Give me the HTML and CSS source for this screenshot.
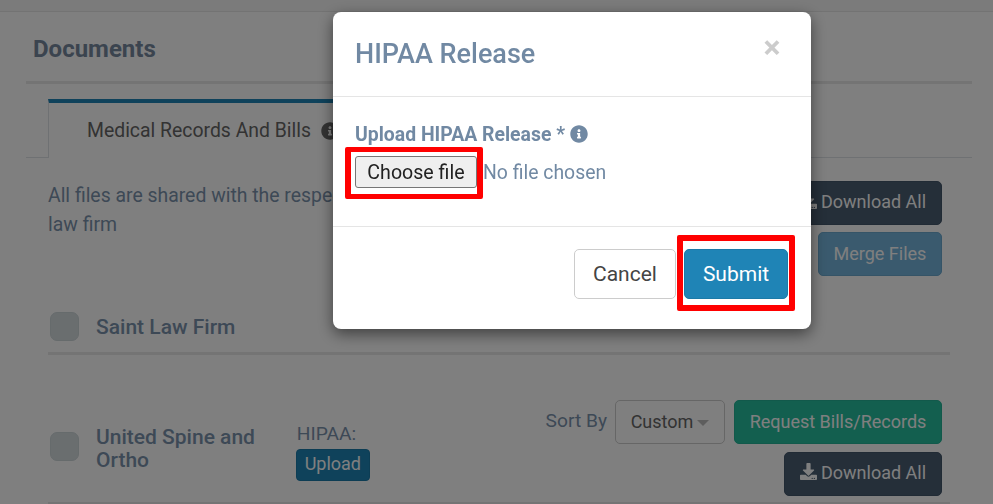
FILE: index.html
```html
<!DOCTYPE html>
<html lang="en">
<head>
<meta charset="utf-8">
<title>HIPAA Release</title>
<link rel="stylesheet" href="styles.css">
</head>
<body>
<svg class="defs" aria-hidden="true">
  <symbol id="i-info" viewBox="0 0 512 512"><path fill="currentColor" d="M256 8C119.043 8 8 119.083 8 256c0 136.997 111.043 248 248 248s248-111.003 248-248C504 119.083 392.957 8 256 8zm0 110c23.196 0 42 18.804 42 42s-18.804 42-42 42-42-18.804-42-42 18.804-42 42-42zm56 254c0 6.627-5.373 12-12 12h-88c-6.627 0-12-5.373-12-12v-24c0-6.627 5.373-12 12-12h12v-64h-12c-6.627 0-12-5.373-12-12v-24c0-6.627 5.373-12 12-12h64c6.627 0 12 5.373 12 12v100h12c6.627 0 12 5.373 12 12v24z"/></symbol>
  <symbol id="i-download" viewBox="0 0 512 512"><path fill="currentColor" d="M216 0h80c13.3 0 24 10.7 24 24v168h87.7c17.8 0 26.7 21.5 14.1 34.1L269.7 378.3c-7.5 7.5-19.8 7.5-27.3 0L90.1 226.1c-12.6-12.6-3.7-34.1 14.1-34.1H192V24c0-13.3 10.7-24 24-24zm296 376v112c0 13.3-10.7 24-24 24H24c-13.3 0-24-10.7-24-24V376c0-13.3 10.7-24 24-24h146.7l49 49c20.1 20.1 52.5 20.1 72.6 0l49-49H488c13.3 0 24 10.7 24 24zm-124 88c0-11-9-20-20-20s-20 9-20 20 9 20 20 20 20-9 20-20zm64 0c0-11-9-20-20-20s-20 9-20 20 9 20 20 20 20-9 20-20z"/></symbol>
</svg>

<div class="topbar"></div>
<main class="panel">
  <h2 class="panel-title">Documents</h2>
  <nav class="tabs">
    <div class="tab">Medical Records And Bills <svg class="icon tab-icon"><use href="#i-info"/></svg></div>
  </nav>
  <div class="intro">
    <p class="intro-text">All files are shared with the respective<br>law firm</p>
    <div class="intro-actions">
      <button class="btn btn-dark"><svg class="icon btn-icon"><use href="#i-download"/></svg>Download All</button>
      <button class="btn btn-merge">Merge Files</button>
    </div>
  </div>
  <section class="row row-first">
    <span class="check"></span>
    <h3 class="name">Saint Law Firm</h3>
  </section>
  <section class="row row-second">
    <span class="check"></span>
    <h3 class="name name-wrap">United Spine and Ortho</h3>
    <div class="hipaa">
      <span class="hipaa-label">HIPAA:</span>
      <button class="btn-upload">Upload</button>
    </div>
    <div class="row-actions">
      <div class="sort-line">
        <span class="sort-label">Sort By</span>
        <button class="btn btn-select">Custom<span class="caret"></span></button>
        <button class="btn btn-green">Request Bills/Records</button>
      </div>
      <button class="btn btn-dark btn-dl2"><svg class="icon btn-icon"><use href="#i-download"/></svg>Download All</button>
    </div>
  </section>
</main>

<div class="backdrop">
  <div class="modal">
    <header class="modal-head">
      <h1 class="modal-title">HIPAA Release</h1>
      <span class="close">×</span>
    </header>
    <div class="modal-body">
      <label class="field-label">Upload HIPAA Release * <svg class="icon label-icon"><use href="#i-info"/></svg></label>
      <div class="file-line">
        <span class="mark mark-file"></span>
        <button class="file-btn">Choose file</button>
        <span class="file-name">No file chosen</span>
      </div>
    </div>
    <footer class="modal-foot">
      <button class="btn-modal btn-cancel">Cancel</button>
      <span class="submit-wrap">
        <span class="mark mark-submit"></span>
        <button class="btn-modal btn-submit">Submit</button>
      </span>
    </footer>
  </div>
</div>
</body>
</html>
```

FILE: styles.css
```css
* { box-sizing: border-box; }
html, body { margin: 0; height: 504px; overflow: hidden; }
body { background: #fff; font-family: Roboto, "Liberation Sans", sans-serif; font-size: 19.2px; color: #6f88a3; }
.defs { display: none; }
.icon { display: inline-block; }

.topbar { height: 12px; background: #f7f7f7; border-bottom: 1px solid #e6e6e6; }
.panel { margin: 0 21px 0 26px; }
.panel-title { margin: 0; height: 72px; padding: 4px 7px 0; display: flex; align-items: center; font-size: 24px; font-weight: 700; color: #76899f; border-bottom: 3px solid #e8e8e8; }

.tabs { margin-top: 15px; height: 59px; padding-left: 22px; border-bottom: 1px solid #dee2e6; display: flex; }
.tab { width: 330px; height: 59px; padding: 16px 0 0 38px; border-top: 4px solid #1e85b7; border-left: 1px solid #dee2e6; background: #fff; color: #666; font-size: 19.4px; line-height: 24px; white-space: nowrap; }
.tab-icon { width: 18px; height: 18px; vertical-align: -3px; margin-left: 5px; color: #666; }

.intro { display: flex; justify-content: space-between; padding: 23px 30px 0 22px; height: 118px; }
.intro-text { margin: 0; font-size: 19.4px; line-height: 29px; color: #7b92ac; }
.intro-actions { display: flex; flex-direction: column; align-items: flex-end; gap: 7px; }

.btn { height: 44px; padding: 0 0 2px; font: 400 18px Roboto, sans-serif; white-space: nowrap; color: #fff; border: 1px solid transparent; border-radius: 5px; display: inline-flex; align-items: center; justify-content: center; }
.btn-dark { background: #4a5e72; width: 158px; border-color: #43566a; padding-bottom: 3px; }
.btn-icon { width: 17px; height: 17px; margin-right: 4px; margin-top: -2px; }
.btn-merge { width: 124px; background: #75b5dc; border-color: #6aa8cf; }
.btn-select { width: 110px; background: #fff; color: #666; border-color: #ccc; }
.caret { width: 0; height: 0; margin-left: 4px; margin-top: 4px; border-left: 6px solid transparent; border-right: 6px solid transparent; border-top: 6px solid #bbb; }
.btn-green { width: 208px; background: #26bf9f; border-color: #24b396; }

.row { display: flex; align-items: center; margin-right: 22px; margin-left: 22px; border-bottom: 3px solid #e8e8e8; }
.row-first { padding: 30px 0 6px; min-height: 79px; }
.row-second { padding: 45px 0 6px; }
.check { flex: none; width: 29px; height: 29px; margin-left: 2px; border-radius: 7px; background: #d4dcdf; border: 1px solid #cdd6d9; }
.row-second .check { margin-top: -3px; }
.name { margin: 2px 0 0 17px; font-size: 21px; line-height: 23px; font-weight: 500; color: #7b92ac; }
.name-wrap { width: 200px; }
.hipaa { display: flex; flex-direction: column; align-items: flex-start; width: 250px; }
.hipaa-label { line-height: 38px; height: 34px; margin-left: 1px; color: #7b92ac; font-size: 19.2px; }
.btn-upload { height: 32px; width: 74px; padding: 0 0 3px; font: 400 18px Roboto, sans-serif; color: #fff; background: #1e85b7; border: 1px solid #1b7aa8; border-radius: 4px; }
.row-actions { flex: 1; display: flex; flex-direction: column; align-items: flex-end; gap: 8px; padding-right: 8px; }
.sort-line { display: flex; align-items: center; gap: 8px; }
.sort-label { color: #7b92ac; margin-top: -3px; white-space: nowrap; }
.btn-select { margin-right: 1px; }

.backdrop { position: fixed; inset: 0; background: rgba(0, 0, 0, .5); }
.modal { margin: 12px 0 0 333px; width: 478px; height: 317px; background: #fff; border-radius: 8px; box-shadow: 0 5px 15px rgba(0, 0, 0, .5); }
.modal-head { height: 85px; border-bottom: 1px solid #e5e5e5; padding: 0 22px; display: flex; justify-content: space-between; align-items: flex-start; }
.modal-title { margin: 25px 0 0; font-size: 27px; line-height: 34px; font-weight: 500; color: #7189a3; }
.close { margin: 16px 0 0; font-size: 32px; line-height: 38px; font-weight: 700; color: #ccc; width: 34px; text-align: center; }

.modal-body { height: 129px; padding: 26px 22px 0; }
.field-label { display: block; font-size: 19.4px; line-height: 24px; font-weight: 700; color: #7189a3; }
.label-icon { width: 18px; height: 18px; vertical-align: -2px; margin-left: 0; }
.file-line { position: relative; margin-top: 9px; display: flex; align-items: center; gap: 6px; }
.file-btn { width: 122px; height: 32px; padding: 0; font: 400 19.6px Roboto, sans-serif; color: #222; background: #efefef; border: 1px solid #767676; border-radius: 3px; }
.file-name { font-size: 19.4px; color: #7189a3; }
.mark { position: absolute; border: 6px solid #f00; border-radius: 2px; pointer-events: none; }
.mark-file { left: -10px; top: -9px; width: 138px; height: 52px; border-width: 5px 6px; }

.modal-foot { height: 103px; border-top: 1px solid #e5e5e5; padding: 22px 23px 0 0; display: flex; justify-content: flex-end; gap: 8px; }
.btn-modal { height: 50px; font: 400 21px Roboto, sans-serif; border-radius: 5px; padding: 0; }
.btn-cancel { width: 102px; background: #fff; color: #444; border: 1px solid #ccc; }
.btn-submit { width: 104px; background: #1f84b6; color: #fff; border: 1px solid #1b7aa8; display: block; }
.submit-wrap { position: relative; height: 50px; }
.mark-submit { left: -7px; top: -14px; width: 118px; height: 76px; }
```
